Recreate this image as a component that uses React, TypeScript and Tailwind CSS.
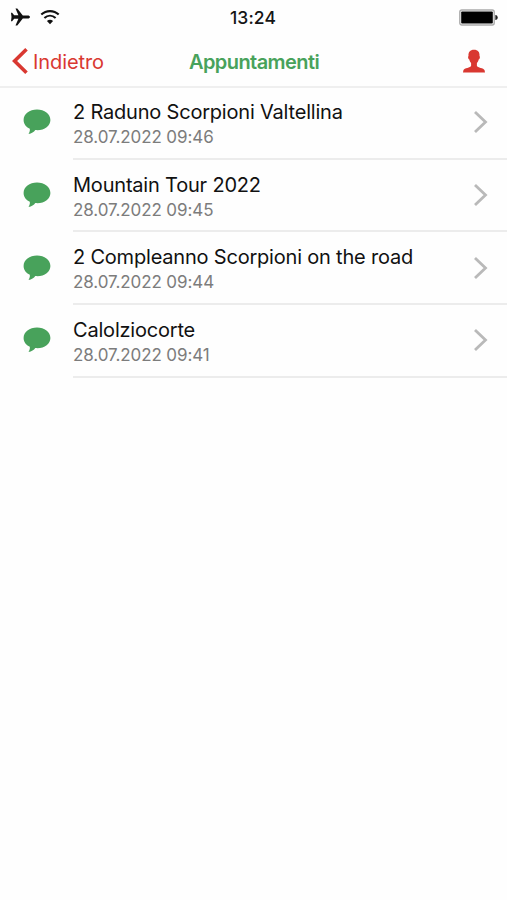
import React from "react";

type Appointment = { title: string; date: string };

const appointments: Appointment[] = [
  { title: "2 Raduno Scorpioni Valtellina", date: "28.07.2022 09:46" },
  { title: "Mountain Tour 2022", date: "28.07.2022 09:45" },
  { title: "2 Compleanno Scorpioni on the road", date: "28.07.2022 09:44" },
  { title: "Calolziocorte", date: "28.07.2022 09:41" },
];

function StatusBar() {
  return (
    <div className="grid h-[35px] grid-cols-[1fr_auto_1fr] items-center pl-[11px] pr-[9px]">
      <div className="flex items-center gap-[10px]">
        <svg className="-mt-0.5" width="19" height="18" viewBox="0 0 19 18" fill="#111">
          <path d="M0 4.7h1.1l2.1 2.6h4.2L4.5.6h1.8l5.5 6.9h4.8c1.5 0 2.4.7 2.4 1.5s-.9 1.5-2.4 1.5h-4.8l-5.5 6.9H4.5l2.9-6.7H3.2l-2.1 2.6H0L.5 9z" />
        </svg>
        <svg className="-mt-0.5" width="20" height="16" viewBox="0 0 20 16" fill="none" stroke="#111" strokeWidth="2.1">
          <path d="M1.3 5.6C6.2.9 13.8.9 18.7 5.6" />
          <path d="M4.4 9c3.3-3 7.9-3 11.2 0" />
          <path d="M6.9 12.1q3.1-2.5 6.2 0L10 15.2z" fill="#111" stroke="none" />
        </svg>
      </div>
      <span className="pr-[3px] pt-px text-[17.5px] font-medium tracking-[0.1px] text-[#151515]">13:24</span>
      <svg className="justify-self-end" width="39" height="17" viewBox="0 0 39 17">
        <rect x=".8" y="1" width="34.4" height="15" rx="2" fill="#fff" stroke="#aaa" strokeWidth="1.4" />
        <rect x="2.2" y="2.4" width="31.6" height="12.2" rx=".8" fill="#000" />
        <path d="M36.3 5.9c1.6.2 2.4 1.2 2.4 2.6s-.8 2.4-2.4 2.6z" fill="#222" />
      </svg>
    </div>
  );
}

function NavigationBar() {
  return (
    <header className="grid h-[53px] grid-cols-[1fr_auto_1fr] items-center border-b-2 border-[#efefef] pl-3 pr-[22px] pt-px">
      <button className="flex items-center gap-[5px] text-[#d93831]">
        <svg width="16" height="26" viewBox="0 0 16 26" fill="none" stroke="currentColor" strokeWidth="3.6">
          <path d="M14.5 1.3 2.6 13l11.9 11.7" />
        </svg>
        <span className="pt-px text-[20px] leading-6 tracking-[-0.1px]">Indietro</span>
      </button>
      <h1 className="ml-[11px] pt-px text-[20px] font-semibold leading-6 tracking-[-0.57px] text-[#48a25b]">Appuntamenti</h1>
      <svg className="justify-self-end" width="22" height="24" viewBox="0 0 22 24" fill="#d93831">
        <path d="M11 .8C7 .8 5.2 3.2 5.5 7c-.9.5-.3 3.2.8 3.6.3 1.5.9 2.5 1.8 3.3v3.2c-.5 1.7-6.8 2-7.7 4.1L0 23.4h22l-.4-2.2c-.9-2.1-7.2-2.4-7.7-4.1v-3.2c.9-.8 1.5-1.8 1.8-3.3 1.1-.4 1.7-3.1.8-3.6C16.8 3.2 15 .8 11 .8z" />
      </svg>
    </header>
  );
}

function AppointmentRow({ title, date }: Appointment) {
  return (
    <li className="flex h-[72.7px] items-stretch pl-[23px]">
      <div className="flex w-[50px] items-center pb-[2px]">
        <svg width="28" height="26" viewBox="0 0 28 26" fill="#48a25b">
          <path d="M14 .6C6.5.6.6 5.1.6 11c0 3.8 2.4 7 6.2 8.8.3 1.9-.3 3.7-1.3 5.1 3.2-.3 5.3-1.7 6.8-3.8 8.5.9 15.1-3.9 15.1-10.1C27.4 5.1 21.5.6 14 .6z" />
        </svg>
      </div>
      <div className="flex flex-1 items-center justify-between border-b-2 border-[#ececec] pr-[19px]">
        <div className="pt-[3px]">
          <h2 className="text-[20px] leading-[26px] tracking-[-0.2px] text-[#111]">{title}</h2>
          <p className="text-[17px] leading-6 tracking-[-0.09px] text-[#7c7c7c]">{date}</p>
        </div>
        <svg width="15" height="24" viewBox="0 0 15 24" fill="none" stroke="#b9b9b9" strokeWidth="2.8">
          <path d="m2 2 10.5 10L2 22" />
        </svg>
      </div>
    </li>
  );
}

export default function App() {
  return (
    <main className="h-[900px] w-[507px] overflow-hidden bg-[#fefefe] font-['Inter','Liberation_Sans',sans-serif]">
      <StatusBar />
      <NavigationBar />
      <ul className="-mt-px">
        {appointments.map((item) => (
          <AppointmentRow key={item.title} {...item} />
        ))}
      </ul>
    </main>
  );
}
